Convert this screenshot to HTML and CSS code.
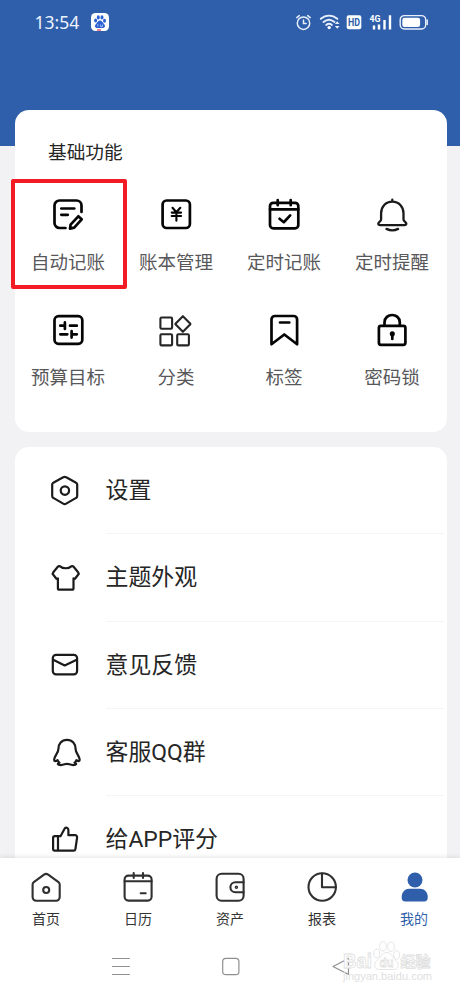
FILE: index.html
```html
<!DOCTYPE html>
<html lang="zh-CN">
<head>
<meta charset="utf-8">
<title>我的</title>
<link rel="stylesheet" href="styles.css">
</head>
<body>
<div class="phone">
  <header class="hero">
    <div class="status">
      <span class="clock">13:54</span>
      <svg class="paw-app" viewBox="0 0 18 18"><rect width="18" height="18" rx="4.5" fill="#fff"/><g fill="#2c5fd0"><ellipse cx="4.6" cy="7.6" rx="1.5" ry="2"/><ellipse cx="7.3" cy="4.4" rx="1.5" ry="2.1"/><ellipse cx="11" cy="4.4" rx="1.5" ry="2.1"/><ellipse cx="13.5" cy="7.8" rx="1.5" ry="2"/><path d="M9 7.600c2 0 2.600 2 4 3.300 1.800 1.700.9 4-1.200 4H6.200c-2.100 0-3-2.300-1.200-4C6.400 9.600 7 7.600 9 7.600z"/></g><path d="M6.800 11v2.500M9.500 11.500v2h2v-2" fill="none" stroke="#b9cdf5" stroke-width=".8"/><path d="M6 17h4" stroke="#e0304c" stroke-width="1.200"/></svg>
      <svg class="signals" viewBox="0 0 136 20">
        <g fill="none" stroke="#e8f0fc" stroke-width="1.500" stroke-linecap="round">
          <circle cx="11.500" cy="11.200" r="6.200"/><path d="M11.500 8v3.600h2.600M4.800 5.600l2.500-2M18.200 5.600l-2.500-2"/>
          <path d="M28.800 6.800c5-4.200 11.500-4.200 16.500 0M31.500 10c3.500-2.900 7.500-2.900 11 0M34.200 13c2-1.600 3.800-1.600 5.700 0" stroke-width="1.900"/>
        </g>
        <circle cx="37.200" cy="15.600" r="1.700" fill="#fff"/>
        <path d="M45.200 9.300l2.300 2.800h-4.600zM45.200 16.800l2.300-2.800h-4.600z" fill="#e8f0fc"/>
        <rect x="54.700" y="3.300" width="14.600" height="14" rx="2" fill="#fff"/>
        <text class="hd" x="56" y="14.200" textLength="12" lengthAdjust="spacingAndGlyphs">HD</text>
        <text class="g4" x="77.500" y="9.800" textLength="11" lengthAdjust="spacingAndGlyphs">4G</text>
        <path d="M82 13.500v4M87 12.500v5M92.500 8v9.500M98 3.300v14.200" stroke="#fff" stroke-width="2.400"/>
        <rect x="108.200" y="3.600" width="25.500" height="13.400" rx="4.200" fill="none" stroke="#e8f0fc" stroke-width="1.400"/>
        <rect x="110.300" y="5.700" width="17.800" height="9.200" rx="2.200" fill="#fff"/><path d="M135.200 7.500v5.500" stroke="#e8f0fc" stroke-width="1.500"/>
      </svg>
    </div>
  </header>

  <main class="content">
    <section class="card features">
      <h2>基础功能</h2>
      <div class="grid">
        <div class="cell highlighted"><svg class="ic" viewBox="0 0 36 36"><path d="M31.500 15V8.500a5 5 0 0 0-5-5h-17a5 5 0 0 0-5 5v17.500a5 5 0 0 0 5 5h6M11.300 11.500h13M11.300 17.800h6.500M28.300 19.300l3.400 3-7.500 8.300-4.200 1 .6-4z"/></svg><span>自动记账</span></div>
        <div class="cell"><svg class="ic" viewBox="0 0 36 36"><rect x="4.600" y="3.500" width="27.300" height="27.500" rx="4"/><path class="thin" d="M14.500 10.800l3.900 4.400 3.900-4.400M13.700 15.600h9.400M13.700 19h9.400M18.400 15.500v8.200"/></svg><span>账本管理</span></div>
        <div class="cell"><svg class="ic" viewBox="0 0 36 36"><rect x="4" y="5.800" width="28.300" height="25.500" rx="3.200"/><path d="M4 12.300h28.300M11.700 3v5.200M24.700 3v5.200M13.500 21.800l4.300 3.400 6.400-6.800"/></svg><span>定时记账</span></div>
        <div class="cell"><svg class="ic bell" viewBox="0 0 36 36"><path d="M18.300 4.600c-6.600 0-11.200 5-11.200 11.700v6.300c0 1.700-2.800 2.200-2.800 4 0 1.200.8 1.600 2 1.600h24c1.200 0 2-.4 2-1.600 0-1.800-2.800-2.300-2.800-4v-6.300c0-6.700-4.600-11.700-11.200-11.700zM18.300 4.500V2.700M12.500 31.900c3.500 1.700 8.100 1.700 11.600 0"/></svg><span>定时提醒</span></div>
        <div class="cell"><svg class="ic" viewBox="0 0 36 36"><rect x="4.500" y="4.200" width="27.800" height="27.600" rx="4"/><path d="M10.300 13.700h4.600M14.900 10.400v6.600M20 13.700h6.800M10.300 22.300h7M21.600 19v6.600M21.600 22.300h5.200"/></svg><span>预算目标</span></div>
        <div class="cell"><svg class="ic cat" viewBox="0 0 36 36"><rect x="3.200" y="5.500" width="11.700" height="11.200" rx="1.200"/><rect x="3.200" y="22.200" width="11.700" height="11.200" rx="1.200"/><rect x="20" y="22.200" width="11.700" height="11.200" rx="1.200"/><path d="M25.700 4.200l7.200 7.200a.8.800 0 0 1 0 1.200l-7.200 7.200-7.200-7.200a.8.800 0 0 1 0-1.200z"/></svg><span>分类</span></div>
        <div class="cell"><svg class="ic" viewBox="0 0 36 36"><path d="M5.500 32.300V7.500a3.500 3.500 0 0 1 3.500-3.500h18.600a3.500 3.500 0 0 1 3.500 3.500v24.800l-12.800-9.800zM14 10.500h9.300"/></svg><span>标签</span></div>
        <div class="cell"><svg class="ic" viewBox="0 0 36 36"><rect x="4.900" y="13.800" width="26.500" height="19" rx="2"/><path d="M10.500 13.500v-3c0-10 15.300-10 15.300 0v3M18.300 22v5"/><circle cx="18.300" cy="21.800" r="1.200"/></svg><span>密码锁</span></div>
      </div>
    </section>

    <section class="card menu">
      <div class="row"><svg class="ic" viewBox="0 0 36 36"><path d="M16.200 4.300L6.300 9.700A2 2 0 0 0 5.200 11.500v11.600a2 2 0 0 0 1.100 1.800l9.900 5.700a3 3 0 0 0 3 0l9.900-5.700a2 2 0 0 0 1.100-1.800V11.500a2 2 0 0 0-1.100-1.800l-9.900-5.400a3 3 0 0 0-3 0z"/><circle cx="17.900" cy="17.600" r="4.200"/></svg><span>设置</span></div>
      <div class="row"><svg class="ic" viewBox="0 0 36 36"><path d="M13.100 6.300c-.9-.4-1.700-.2-2.300.5l-4.500 5.400a2 2 0 0 0 0 2.600l2.500 3.200c.6.800 1.400.9 2.100.4v9.800c0 .9.600 1.500 1.500 1.500h12.600c.9 0 1.500-.6 1.500-1.500v-9.800c.7.500 1.500.4 2.100-.4l2.500-3.200a2 2 0 0 0 0-2.600l-4.500-5.400c-.6-.7-1.400-.9-2.300-.5-3 2.600-8.200 2.600-11.200 0z"/></svg><span>主题外观</span></div>
      <div class="row"><svg class="ic" viewBox="0 0 36 36"><rect x="5.800" y="7.800" width="24.300" height="19.600" rx="3.300"/><path d="M6.200 12.700l11.500 5.700 12-5.700"/></svg><span>意见反馈</span></div>
      <div class="row"><svg class="ic" viewBox="0 0 36 36"><path d="M20 4.900c-5.600 0-8.500 4-8.500 8.600 0 4.700-4.400 7.700-4.400 11.300 0 1.800 1.600 1.800 3.500.4.400 1.200 1 2 1.900 2.500-2.600 1-1.900 2.400 1.200 2.400 3.500 0 4-1.300 6.300-1.300s2.800 1.300 6.300 1.300c3.100 0 3.800-1.400 1.200-2.400.9-.5 1.500-1.300 1.900-2.500 1.900 1.400 3.300 1.400 3.300-.4 0-3.600-4.200-6.600-4.200-11.300 0-4.600-2.900-8.600-8.500-8.600z"/></svg><span>客服QQ群</span></div>
      <div class="row"><svg class="ic" viewBox="0 0 36 36"><path d="M10.800 14.200h2.700l4.200-7.700c.8-1.700 3.700-.9 3.700 1.500v5.200h6.600c1.500 0 2.300 1 2.100 2.300l-1.700 11.600c-.2 1.100-.8 1.600-1.800 1.600H7.800c-1.100 0-1.700-.6-1.700-1.700V15.900c0-1.100.6-1.700 1.700-1.700zM11 14.200v14.500"/></svg><span>给APP评分</span></div>
    </section>
  </main>

  <footer class="bottom">
    <nav class="tabs">
      <div class="tab"><svg class="ic" viewBox="0 0 36 36"><path d="M16 5.700L5.800 13.200a3 3 0 0 0-1.200 2.400v12.500a3.600 3.600 0 0 0 3.600 3.600h19.900a3.600 3.600 0 0 0 3.600-3.600V15.600a3 3 0 0 0-1.200-2.400L20.200 5.700a3.500 3.500 0 0 0-4.200 0z"/><circle cx="18.200" cy="21" r="3"/></svg><span>首页</span></div>
      <div class="tab"><svg class="ic" viewBox="0 0 36 36"><rect x="4.600" y="6.600" width="27" height="25" rx="3.800"/><path d="M4.600 12.300h27M13.700 4v5M23 4v5M20.700 24.300h5"/></svg><span>日历</span></div>
      <div class="tab"><svg class="ic" viewBox="0 0 36 36"><rect x="4.600" y="4.700" width="27" height="27" rx="5"/><path d="M31.600 13.200h-8.200a5 5 0 0 0 0 10h8.200"/><circle cx="24.400" cy="18.200" r=".7"/></svg><span>资产</span></div>
      <div class="tab"><svg class="ic" viewBox="0 0 36 36"><circle cx="18.200" cy="18" r="13.700"/><path d="M18 4.500v13.700h13.700"/></svg><span>报表</span></div>
      <div class="tab active"><svg class="ic solid" viewBox="0 0 36 36"><circle cx="19" cy="11" r="7.500"/><path d="M13.200 19.800h11c4 0 7.500 3.500 7.500 8v1.200c0 2.200-1.300 3.500-3.500 3.500H9.200c-2.200 0-3.500-1.300-3.500-3.500v-1.200c0-4.500 3.500-8 7.500-8z"/></svg><span>我的</span></div>
    </nav>
    <div class="system">
      <svg viewBox="0 0 460 60"><g fill="none" stroke="#8f8f8f" stroke-width="1.200"><path d="M112 20.500h17.700M112 28.500h17.700M112 36.500h17.700"/><rect x="222.700" y="20.400" width="16.200" height="16.200" rx="3.200"/><path d="M348.500 20.500v16l-15.500-8z" stroke-linejoin="round"/></g></svg>
      <svg class="watermark" viewBox="0 0 92 46">
        <text class="wm-main" x="1" y="30" textLength="29" lengthAdjust="spacingAndGlyphs">Bai</text>
        <g class="wm-paw"><ellipse cx="34.700" cy="15.500" rx="3" ry="4.300"/><ellipse cx="41" cy="8.300" rx="3.300" ry="4.700"/><ellipse cx="49" cy="8.800" rx="3.300" ry="4.700"/><ellipse cx="54.500" cy="17" rx="2.900" ry="4.200"/><path d="M44.500 14.500c4.500 0 5.500 4.500 9.500 8 4 3.500 2 9-2 9H37c-4.500 0-6-5.500-2-9 4-3 5-8 9.500-8z"/></g>
        <text class="wm-du" x="37.500" y="29" textLength="14" lengthAdjust="spacingAndGlyphs">du</text>
        <text class="wm-cn" x="58.500" y="29" textLength="30">经验</text>
        <text class="wm-url" x="1" y="42" textLength="89" lengthAdjust="spacingAndGlyphs">jingyan.baidu.com</text>
      </svg>
    </div>
  </footer>
</div>
</body>
</html>
```
FILE: styles.css
```css
* { box-sizing: border-box; }
body {
  margin: 0;
  background: #f2f2f5;
  color: #262626;
  font-family: Roboto, "Noto Sans CJK SC", sans-serif;
}
.phone {
  width: 460px;
  height: 995px;
  display: flex;
  flex-direction: column;
  overflow: hidden;
}
.hero { height: 145.500px; flex: none; background: #2f5faa; }
.status { display: flex; align-items: center; height: 44px; padding-left: 34.500px; }
.clock { width: 56.500px; font: 17.500px/20px "Noto Sans", sans-serif; color: #edf4ff; white-space: nowrap; }
.paw-app { width: 18px; height: 18px; }
.signals { width: 136px; height: 20px; margin-left: 183px; }
.hd { font: bold 11px Roboto, sans-serif; fill: #2f5faa; }
.g4 { font: bold 9px Roboto, sans-serif; fill: #fff; }

.content { flex: 1; min-height: 0; margin-top: -36px; padding: 0 13.500px 0 14.500px; overflow: hidden; }
.card { background: #fff; border-radius: 14px; }
.features { height: 322.500px; padding-top: 28px; }
h2 { margin: 0 0 0 33.500px; font-size: 18.700px; line-height: 30px; font-weight: 400; }
.grid { display: grid; grid-template-columns: repeat(4, 108px); grid-auto-rows: 110px; row-gap: 5px; margin: 11px 0 0 -.5px; }
.cell { display: flex; flex-direction: column; align-items: center; padding-top: 18.500px; font-size: 18.500px; line-height: 28px; color: #58585b; }
.cell span { margin-top: 16px; }
.highlighted { width: 116px; margin-left: -3px; padding-top: 14.500px; padding-right: 2px; border: 4px solid #f31c25; border-radius: 2px; }

.ic { display: block; flex: none; width: 36px; height: 36px; fill: none; stroke: #050505; stroke-width: 2.700; stroke-linecap: round; stroke-linejoin: round; }
.thin { stroke-width: 2.100; }
.bell { stroke: #1b1b1b; stroke-width: 2.300; }
.cat { stroke: #252525; stroke-width: 2.100; transform: translateX(-.8px); }

.menu { margin-top: 15px; height: 450px; }
.row { display: flex; align-items: center; height: 87.300px; padding-left: 32.500px; font-size: 22.900px; }
.row .ic { stroke: #1b1b1b; stroke-width: 2.200; }
.row span { flex: 1; height: 87.300px; margin-left: 22.500px; margin-right: 3px; line-height: 88px; border-bottom: 1px solid #f5f5f6; }

.bottom { position: relative; flex: none; height: 137.500px; background: #fff; box-shadow: 0 -1px 5px rgba(0, 0, 0, .1); }
.tabs { display: flex; height: 80px; padding-top: 11px; }
.tab { flex: 1; display: flex; flex-direction: column; align-items: center; color: #333; font-size: 14px; line-height: 20px; }
.tab .ic { stroke: #303030; stroke-width: 2.100; }
.tab span { margin-top: 4px; }
.active { color: #2f5faa; }
.tab .solid { fill: #2f5faa; stroke: none; }
.system { position: relative; height: 57px; }
.system > svg:first-child { display: block; width: 460px; height: 60px; }
.watermark { position: absolute; left: 342px; top: 0; width: 92px; height: 46px; fill: #fff; stroke: #dedede; stroke-width: .8; }
.wm-main { font: bold 20px "Liberation Sans", sans-serif; }
.wm-du { font: bold 13px "Liberation Sans", sans-serif; }
.wm-cn { font: bold 15px "Noto Sans CJK SC", sans-serif; }
.wm-url { font: 10.500px "Liberation Sans", sans-serif; fill: #e0e0e0; stroke: none; }
```
